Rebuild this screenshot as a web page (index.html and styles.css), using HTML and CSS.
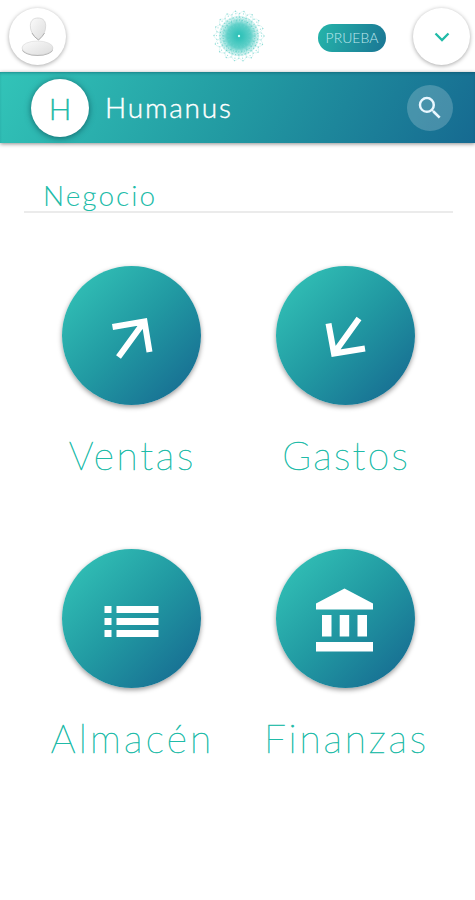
FILE: index.html
```html
<!DOCTYPE html>
<html lang="es">
<head>
<meta charset="utf-8">
<title>Humanus</title>
<link rel="stylesheet" href="styles.css">
</head>
<body>
<header class="top">
  <div class="round avatar">
    <svg width="58" height="58" viewBox="0 0 58 58">
      <defs><linearGradient id="g" x1="0" y1="0" x2="1" y2="1"><stop offset="0" stop-color="#fbfbfb"/><stop offset="1" stop-color="#dcdcdc"/></linearGradient></defs>
      <ellipse cx="28.500" cy="41" rx="15.500" ry="7" fill="#aaa"/>
      <ellipse cx="28.500" cy="40" rx="15.500" ry="7" fill="url(#g)" stroke="#d8d8d8" stroke-width=".6"/>
      <path d="M21.500 20C20.500 13 24 10 29 10s8.500 3 7.500 10C36 26 32 29 29.500 32C26 29 22.500 26 21.500 20Z" fill="url(#g)" stroke="#d0d0d0" stroke-width=".7"/>
      <path d="M23 25Q25 29 29.500 32Q34 28 35.500 25" fill="none" stroke="#b0b0b0"/>
    </svg>
  </div>
  <svg class="logo" width="54" height="54" viewBox="-27 -27 54 54">
    <defs>
      <radialGradient id="r"><stop offset="0" stop-color="#25bfb5"/><stop offset=".6" stop-color="#36c4bb" stop-opacity=".75"/><stop offset="1" stop-color="#50cdc5" stop-opacity=".1"/></radialGradient>
      <g id="p" fill="none" stroke="#35c2b9" stroke-width=".4"><ellipse cx="12.500" rx="12.500" ry="5"/><ellipse cx="10" rx="10" ry="6"/></g>
      <g id="q"><use href="#p"/><use href="#p" transform="rotate(20)"/><use href="#p" transform="rotate(40)"/></g>
    </defs>
    <circle r="20" fill="url(#r)"/>
    <g opacity=".3"><use href="#q"/><use href="#q" transform="rotate(60)"/><use href="#q" transform="rotate(120)"/><use href="#q" transform="rotate(180)"/><use href="#q" transform="rotate(240)"/><use href="#q" transform="rotate(300)"/></g>
    <g fill="none" stroke="#4fcac2" stroke-linecap="round">
      <circle r="25" stroke-width="1.400" stroke-dasharray="0 8.727" opacity=".6"/>
      <circle r="22.500" stroke-width="1.300" stroke-dasharray="0 3.927" opacity=".55"/>
      <circle r="19" stroke-width="1.300" stroke-dasharray="0 3.316" opacity=".7"/>
      <circle r="16" stroke-width="1.300" stroke-dasharray="0 2.793" opacity=".7"/>
    </g>
    <circle r="1.200" fill="#d9fff9"/>
  </svg>
  <span class="badge">PRUEBA</span>
  <div class="round chevron">
    <svg width="16" height="10" viewBox="0 0 16 10"><path d="M1.500 1.500 8 8 14.500 1.500" fill="none" stroke="#20bba8" stroke-width="2.300"/></svg>
  </div>
</header>
<div class="bar">
  <span class="initial">H</span>
  <span class="company">Humanus</span>
  <span class="search"><svg width="30" height="30" viewBox="0 0 24 24" fill="#e9f7ff"><path d="M15.500 14h-.79l-.28-.27A6.471 6.471 0 0 0 16 9.500 6.500 6.500 0 1 0 9.500 16c1.610 0 3.090-.59 4.230-1.570l.27.28v.79l5 4.990L20.490 19l-4.990-5zm-6 0C7.010 14 5 11.990 5 9.500S7.010 5 9.500 5 14 7.010 14 9.500 11.990 14 9.500 14z"/></svg></span>
</div>
<main>
  <h1 class="section"><span class="section-text">Negocio</span></h1>
  <div class="grid">
    <div class="item">
      <div class="disc"><svg width="139" height="139" viewBox="0 0 139 139" fill="none" stroke="#fff" stroke-width="6"><path d="M56.500 91 82 56M50.500 61 82.500 55.500 87.500 86"/></svg></div>
      <span class="label ventas">Ventas</span>
    </div>
    <div class="item">
      <div class="disc"><svg width="139" height="139" viewBox="0 0 139 139" fill="none" stroke="#fff" stroke-width="6"><path d="M83 52.500 57.500 88M52.500 57.500 58 87.500 89 82.500"/></svg></div>
      <span class="label gastos">Gastos</span>
    </div>
    <div class="item">
      <div class="disc"><svg width="139" height="139" viewBox="0 0 139 139" fill="#fff"><path d="M42.500 57h7v7h-7zM54.500 57h42v7h-42zM42.500 69h7v7h-7zM54.500 69h42v7h-42zM42.500 81h7v7h-7zM54.500 81h42v7h-42z"/></svg></div>
      <span class="label almacen">Almacén</span>
    </div>
    <div class="item">
      <div class="disc"><svg width="139" height="139" viewBox="0 0 139 139" fill="#fff"><path d="M68.500 39.500 97 54.500v6H40v-6zM46 66h9.500v21.500H46zM63.700 66h9.500v21.500h-9.500zM81.500 66H91v21.500h-9.500zM40 93h57v9.500H40z"/></svg></div>
      <span class="label finanzas">Finanzas</span>
    </div>
  </div>
</main>
</body>
</html>
```
FILE: styles.css
```css
* { box-sizing: border-box; }
body { margin: 0; background: #fff; font-family: Lato, "Open Sans", sans-serif; color: #20bba8; }
svg { display: block; }
.top { height: 72px; display: grid; grid-template-columns: 212px 106px 95px 62px; }
.round { width: 57px; height: 57px; border-radius: 50%; background: #fff; box-shadow: 0 1px 4px rgba(0,0,0,.35); }
.avatar { margin: 8px 0 0 9px; }
.logo { margin-top: 9px; }
.badge { width: 68px; height: 28px; margin-top: 24px; border-radius: 14px; background: linear-gradient(110deg, #25b5aa, #1a7594); color: #bfe8ee; font-size: 14px; font-weight: 300; line-height: 28px; text-align: center; white-space: nowrap; }
.chevron { margin-top: 8px; display: flex; align-items: center; justify-content: center; }
.bar { height: 71px; padding: 0 22px 0 31px; display: flex; align-items: center; background: linear-gradient(120deg, #32c4b8 0%, #229aa2 50%, #166a91 100%); box-shadow: 0 1px 4px rgba(0,0,0,.45), inset 0 2px 3px -1px rgba(0,60,80,.4); }
.initial { width: 58px; height: 58px; border-radius: 50%; background: #fff; box-shadow: 0 1px 6px rgba(0,50,60,.6); font-size: 30px; font-weight: 300; line-height: 58px; text-align: center; -webkit-text-stroke: .3px #20bba8; }
.company { margin: -2px 0 0 16px; color: #fff; font-size: 28px; font-weight: 300; letter-spacing: 1.800px; -webkit-text-stroke: .4px #fff; }
.search { width: 46px; height: 46px; margin-left: auto; border-radius: 50%; background: rgba(255,255,255,.2); display: flex; align-items: center; justify-content: center; }
.section { margin: 34px 22px 0 24px; height: 36px; padding-left: 19px; border-bottom: 2px solid #ebebeb; font-size: 28px; font-weight: 300; line-height: 37px; letter-spacing: 2px; }
.grid { display: grid; grid-template-columns: 214px 214px; grid-auto-rows: 283px; margin: 53px 0 0 24px; }
.item { display: flex; flex-direction: column; align-items: center; }
.disc { width: 139px; height: 139px; border-radius: 50%; background: linear-gradient(135deg, #33c3b7 5%, #2199a2 50%, #15648f 100%); box-shadow: 0 2px 5px rgba(0,0,0,.4); }
.label { margin-top: 26px; font-size: 39px; font-weight: 100; line-height: 48px; white-space: nowrap; -webkit-text-stroke: .6px #20bba8; }
.ventas { letter-spacing: 2.700px; margin-right: -2.700px; }
.gastos { letter-spacing: 2.300px; margin-right: -2.300px; }
.almacen { letter-spacing: 3.200px; margin-right: -3.200px; }
.finanzas { letter-spacing: 2.800px; margin-right: -2.800px; }
```
